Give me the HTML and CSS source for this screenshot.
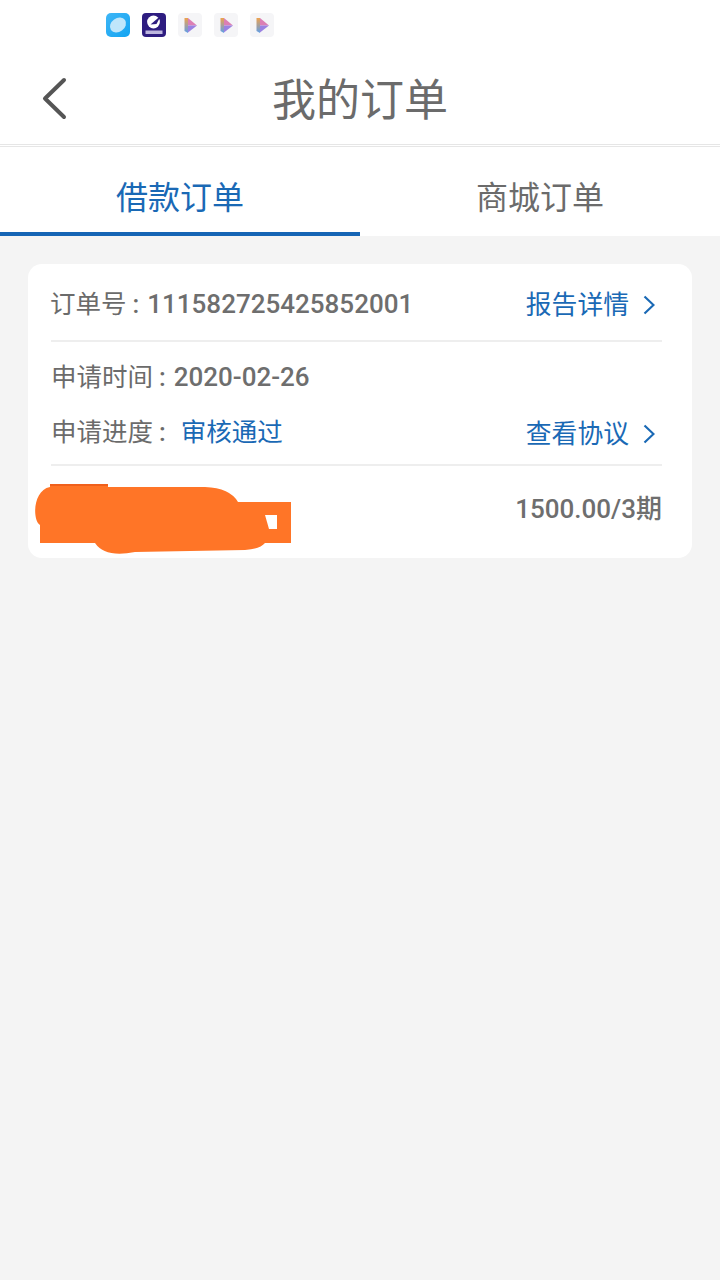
FILE: index.html
```html
<!DOCTYPE html>
<html lang="zh-CN">
<head>
    <meta charset="UTF-8">
    <meta name="viewport" content="width=device-width, initial-scale=1.0">
    <title>我的订单</title>
    <link rel="stylesheet" href="styles.css">
</head>
<body>
    <!-- status bar icons -->
    <div class="status-bar">
        <svg class="app-icon" viewBox="0 0 24 24">
            <defs>
                <linearGradient id="blue" x1="0" y1="0" x2="1" y2="1">
                    <stop offset="0" stop-color="#3fb6f6"/>
                    <stop offset="1" stop-color="#12a4f2"/>
                </linearGradient>
                <linearGradient id="band" x1="0" y1="0" x2="0" y2="1">
                    <stop offset="0" stop-color="#eda24f"/>
                    <stop offset="1" stop-color="#5f9ee8"/>
                </linearGradient>
            </defs>
            <rect width="24" height="24" rx="5" fill="url(#blue)"/>
            <ellipse cx="12" cy="12" rx="8.6" ry="6.8" transform="rotate(-35 12 12)" fill="#bfe6fb"/>
        </svg>
        <svg class="app-icon" viewBox="0 0 24 24">
            <rect width="24" height="24" rx="4" fill="#2e1d80"/>
            <circle cx="11.5" cy="9" r="6.4" fill="#fff"/>
            <path d="M8.5 11.5 L19 2.5 L14.5 11 Z" fill="#2e1d80"/>
            <rect x="3.5" y="17.5" width="17" height="3.5" fill="#bdb6de"/>
        </svg>
        <svg class="app-icon" viewBox="0 0 24 24"><use href="#play"/></svg>
        <svg class="app-icon" viewBox="0 0 24 24"><use href="#play"/></svg>
        <svg class="app-icon" viewBox="0 0 24 24">
            <g id="play">
                <rect width="24" height="24" rx="4" fill="#f5f5f7"/>
                <path d="M6.5 5 L10 5 L10 20 L6.5 18 Z" fill="url(#band)"/>
                <path d="M10 5 L19 12.5 L10 12.5 Z" fill="#dc7fb4"/>
                <path d="M10 12.5 L19 12.5 L10 19.5 Z" fill="#9a82e2"/>
            </g>
        </svg>
    </div>

    <header class="nav-bar">
        <svg class="back-icon" viewBox="0 0 26 44">
            <path d="M23 3 L4 21.5 L23 40"/>
        </svg>
        <h1>我的订单</h1>
    </header>

    <nav class="tabs">
        <div class="tab active">借款订单</div>
        <div class="tab">商城订单</div>
    </nav>

    <main class="content">
        <section class="card">
            <div class="row row-order">
                <p class="info">订单号<span class="colon">:</span><b>111582725425852001</b></p>
                <a class="link">报告详情
                    <svg class="arrow" viewBox="0 0 12 20"><path d="M1.5 1.5 L10.5 10 L1.5 18.5"/></svg>
                </a>
            </div>
            <div class="row-apply">
                <p class="info">申请时间<span class="colon">:</span><b>2020-02-26</b></p>
                <div class="apply-line">
                    <p class="info">申请进度<span class="colon">:</span><span class="status">审核通过</span></p>
                    <a class="link link-low">查看协议
                        <svg class="arrow" viewBox="0 0 12 20"><path d="M1.5 1.5 L10.5 10 L1.5 18.5"/></svg>
                    </a>
                </div>
            </div>
            <div class="row row-product">
                <!-- name scribbled over in the screenshot -->
                <svg class="scribble" viewBox="0 0 251 72">
                    <path fill="#ff7527" d="M10 0 H68 V3 H165 Q190 4 198 18 H251 V59 H225 Q220 65 205 66 L95 68 Q65 74 55 59 H0 V41 C-8 36 -7 6 10 3 Z"/>
                    <path fill="#f0601c" d="M10 0 H68 V2 H10 Z"/>
                    <path fill="#fff" d="M225 31 H237 V45 H229 Z"/>
                </svg>
                <p class="amount">1500.00/3期</p>
            </div>
        </section>
    </main>
</body>
</html>
```

FILE: styles.css
```css
* {
    box-sizing: border-box;
}
body {
    margin: 0;
    padding: 0;
    min-height: 1280px;
    background: #f4f4f4;
    color: #666;
    font-family: Roboto, "Noto Sans CJK SC", sans-serif;
}
p {
    margin: 0;
}
.status-bar {
    display: flex;
    gap: 12px;
    height: 50px;
    padding: 13px 0 0 106px;
    background: #fff;
}
.app-icon {
    width: 24px;
    height: 24px;
}
.nav-bar {
    display: flex;
    align-items: center;
    justify-content: center;
    position: relative;
    height: 97px;
    background: #fff;
    border-bottom: 3px double #e6e6e6;
}
.nav-bar h1 {
    margin: 0;
    font-size: 44px;
    font-weight: 400;
    color: #6b6b6b;
}
.back-icon {
    position: absolute;
    left: 41px;
    top: 27px;
    width: 26px;
    height: 44px;
    fill: none;
    stroke: #555;
    stroke-width: 4;
    stroke-linecap: round;
    stroke-linejoin: round;
}
.tabs {
    display: flex;
    height: 89px;
    background: #fff;
}
.tab {
    flex: 1;
    height: 89px;
    padding-top: 28px;
    font-size: 32px;
    line-height: 46px;
    text-align: center;
    color: #6b6b6b;
    background: #fff;
}
.tab.active {
    color: #1a69b5;
    border-bottom: 4px solid #1565b5;
}
.content {
    padding: 28px 28px 0;
}
.card {
    height: 294px;
    padding: 0 30px 0 23px;
    background: #fff;
    border-radius: 14px;
}
.row {
    display: flex;
    align-items: center;
    justify-content: space-between;
}
.row-order {
    height: 78px;
    padding-top: 4px;
    border-bottom: 2px solid #eee;
}
.row-apply {
    height: 124px;
    padding: 16px 0 0 1px;
    border-bottom: 2px solid #eee;
}
.apply-line {
    display: flex;
    justify-content: space-between;
    align-items: center;
    margin-top: 15px;
}
.row-product {
    height: 92px;
    align-items: flex-start;
}
.info {
    margin-left: -1px;
    font-size: 25.5px;
    line-height: 38px;
    color: #6b6b6b;
    white-space: nowrap;
}
.info b {
    font-size: 26px;
    font-weight: 500;
    color: #6e6e6e;
}
.colon {
    margin: 0 8px 0 6px;
    font-weight: 500;
}
.status {
    margin-left: 7px;
    color: #1a69b5;
}
.link {
    display: flex;
    align-items: center;
    gap: 14px;
    margin-top: 2px;
    font-size: 25.8px;
    line-height: 38px;
    color: #1a69b5;
}
.link-low {
    margin-top: 4px;
}
.arrow {
    width: 12px;
    height: 20px;
    margin-right: 7px;
    fill: none;
    stroke: #1a69b5;
    stroke-width: 2.2;
}
.scribble {
    width: 251px;
    height: 72px;
    margin: 18px 0 0 -11px;
    overflow: visible;
}
.amount {
    margin-top: 24px;
    font-size: 26px;
    font-weight: 500;
    line-height: 38px;
    color: #6e6e6e;
}
```
